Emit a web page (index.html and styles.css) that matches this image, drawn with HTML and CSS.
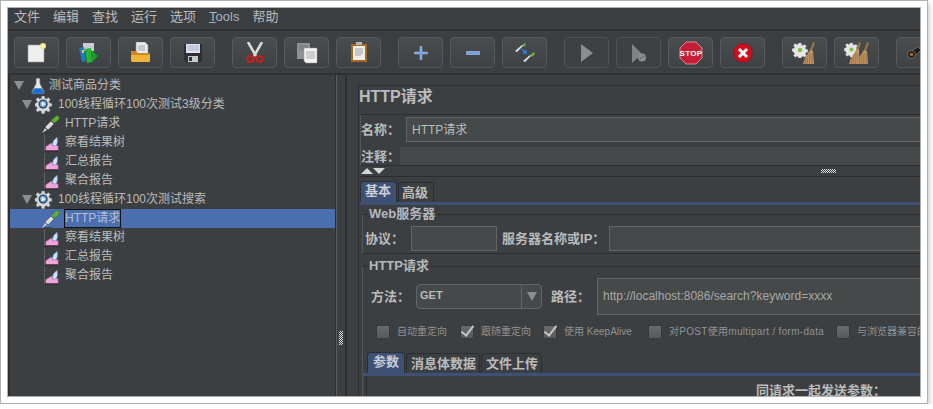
FILE: index.html
```html
<!DOCTYPE html>
<html>
<head>
    <title>JMeter</title>
    <link rel="stylesheet" href="styles.css">
</head>
<body>
    <!-- shared icons for the tree -->
    <svg class="defs" width="0" height="0">
        <symbol id="i-flask" viewBox="0 0 16 18">
            <path d="M6 .5h4v5.500l5 10q.5 1.500-1 1.500H2q-1.500 0-1-1.500l5-10z" fill="#e6e9ee" stroke="#9a9ea4" stroke-width=".6"/>
            <path d="M4 11.500h8l3 5q.2 1.400-1 1.400H2q-1.200 0-1-1.400z" fill="#1c6fd0"/>
        </symbol>
        <symbol id="i-gear" viewBox="0 0 18 18">
            <path d="M7.500 0h3l.5 2.600 1.700.7 2.200-1.500 2.100 2.100-1.500 2.200.7 1.700 2.600.5v3l-2.600.5-.7 1.700 1.500 2.200-2.100 2.100-2.200-1.500-1.700.7-.5 2.600h-3l-.5-2.600-1.700-.7-2.200 1.500-2.100-2.100 1.500-2.200-.7-1.700-2.600-.5v-3l2.600-.5.7-1.700-1.500-2.200 2.100-2.100 2.200 1.500 1.700-.7z" transform="scale(.9)" fill="#d8d8d8" stroke="#8a8a8a" stroke-width=".5"/>
            <circle cx="8.100" cy="8.100" r="4.600" fill="#24507f"/>
            <circle cx="8.100" cy="8.100" r="3" fill="#8db4dc"/>
            <path d="M6.800 6l3.600 2.100-3.600 2.100z" fill="#fff"/>
        </symbol>
        <symbol id="i-pipette" viewBox="0 0 18 18">
            <path d="M0 18l3-5 2 2z" fill="#c8c8c8"/>
            <path d="M3 12l6-6 3 3-6 6z" fill="#d9dde0" stroke="#555" stroke-width=".7"/>
            <path d="M9 5l3 3 2-1 3-3q1-2-1-3t-3 1l-2 2z" fill="#5fae3c" stroke="#3d7a25" stroke-width=".5"/>
            <path d="M2 18h8" stroke="#2b2b2b" stroke-width="1"/>
        </symbol>
        <symbol id="i-chart" viewBox="0 0 16 18">
            <path d="M.5 0v18" stroke="#8a8a8a" stroke-dasharray="1 1"/>
            <path d="M2 17v-4l6-4 1 3h6v5z" fill="#f0a6dc" stroke="#d060b0" stroke-width=".6"/>
            <path d="M9 11q0-5 5-8 1 6-1 8.500-2 1.500-4-.5z" fill="#cfe2fb" stroke="#7aa3d8" stroke-width=".6"/>
            <path d="M1 17.500h14" stroke="#222"/>
        </symbol>
        <symbol id="i-broom" viewBox="0 0 12 22">
            <path d="M10 0l2 1-3 8-2-1z" fill="#9a7446"/>
            <path d="M7 8l3 1 1 13H0l2-6z" fill="#bf9565"/>
            <path d="M3 16l-1 6M5 13l-1 9M7 11l-.5 11M9 11l0 11" stroke="#8c6a42" stroke-width=".7"/>
        </symbol>
        <symbol id="i-cog" viewBox="0 0 16 16">
            <path d="M6.500 0h3l.4 2.200 1.600.7 1.900-1.300 2 2-1.300 1.900.7 1.600 2.200.4v3l-2.200.4-.7 1.600 1.300 1.900-2 2-1.900-1.300-1.600.7-.4 2.200h-3l-.4-2.200-1.600-.7-1.900 1.300-2-2 1.300-1.900-.7-1.600L-1 9.500v-3l2.200-.4.7-1.600L.6 2.600l2-2 1.900 1.300 1.600-.7z" transform="translate(1 1) scale(.87)" fill="#e6e6e6" stroke="#a8a8a8" stroke-width=".5"/>
            <circle cx="8" cy="8" r="2.200" fill="#7bc142"/>
        </symbol>
    </svg>

    <div class="frame">
        <div class="window">
            <div class="menubar">
                <span>文件</span>
                <span>编辑</span>
                <span>查找</span>
                <span>运行</span>
                <span>选项</span>
                <span class="latin"><u>T</u>ools</span>
                <span>帮助</span>
            </div>

            <div class="toolbar">
                <div class="tool-group">
                    <button class="tool"><svg width="20" height="22" viewBox="0 0 20 22"><path d="M1 3h16v17H1z" fill="#efefef" stroke="#9a9a9a" stroke-width=".6"/><circle cx="16" cy="4" r="3" fill="#f6e27a"/><circle cx="16" cy="4" r="1.500" fill="#fffbe0"/></svg></button>
                    <button class="tool"><svg width="22" height="22" viewBox="0 0 22 22"><path d="M5 1h11v8H5z" fill="#c9cdd2"/><path d="M1 6l5-1 2 14-4 1z" fill="#1f78c8"/><path d="M7 7l6-1 1 14-5 1z" fill="#25b52f"/><path d="M13 8l7 6-6 6z" fill="#1c9a2a"/><path d="M4 8h2v3H4z" fill="#e8c640"/></svg></button>
                    <button class="tool"><svg width="22" height="22" viewBox="0 0 22 22"><path d="M6 0h9l3 3v10H6z" fill="#eceff2" stroke="#8a8a8a" stroke-width=".6"/><path d="M8 4h7M8 6h7M8 8h7" stroke="#8a9098" stroke-width=".8"/><path d="M1 9h5l2 2h12v8q0 1-1 1H3q-2 0-2-2z" fill="#c98a22"/><path d="M1 13h19v6q0 1-1 1H3q-2 0-2-2z" fill="#eeb43a"/></svg></button>
                    <button class="tool"><svg width="20" height="20" viewBox="0 0 20 20"><path d="M1 1h18v18H3l-2-2z" fill="#2d2f33"/><path d="M3 1h14v9H3z" fill="#dfe5ec"/><path d="M4 3h12M4 5h12M4 7h12" stroke="#8fa6c4" stroke-width=".8"/><path d="M5 13h10v6H5z" fill="#c9c9c9"/><path d="M6 14h3v4H6z" fill="#333"/></svg></button>
                </div>
                <div class="tool-group">
                    <button class="tool"><svg width="18" height="21" viewBox="0 0 18 21"><path d="M2 0l8 14M16 0L8 14" stroke="#d8dadc" stroke-width="2.600"/><circle cx="4.500" cy="17" r="3" fill="none" stroke="#d11a1a" stroke-width="2"/><circle cx="13.500" cy="17" r="3" fill="none" stroke="#d11a1a" stroke-width="2"/></svg></button>
                    <button class="tool"><svg width="22" height="22" viewBox="0 0 22 22"><path d="M1 1h13v16H1z" fill="#8e9296"/><path d="M3 4h9M3 6h9M3 8h9" stroke="#6c7074" stroke-width=".8"/><path d="M8 6h13v15H10l-2-2z" fill="#f2f2f2" stroke="#999" stroke-width=".5"/><path d="M10 10h9M10 12h9M10 14h9M10 16h9" stroke="#9a9a9a" stroke-width=".8"/></svg></button>
                    <button class="tool"><svg width="18" height="21" viewBox="0 0 18 21"><path d="M1 2h16v18H1z" fill="#a8691c"/><path d="M3 4h12v14H3z" fill="#eceef0"/><path d="M5 7h8M5 9h8M5 11h8M5 13h6" stroke="#888" stroke-width=".8"/><path d="M6 0h6v3H6z" fill="#b5b5b5"/></svg></button>
                </div>
                <div class="tool-group">
                    <button class="tool"><svg width="14" height="14" viewBox="0 0 14 14"><path d="M6 .5h2V6h5.500v2H8v5.500H6V8H.5V6H6z" fill="#6aa2e6" stroke="#cfe0f7" stroke-width=".4"/></svg></button>
                    <button class="tool"><svg width="14" height="4" viewBox="0 0 14 4"><path d="M.5.5h13v3H.5z" fill="#6aa2e6" stroke="#cfe0f7" stroke-width=".5"/></svg></button>
                    <button class="tool"><svg width="22" height="21" viewBox="0 0 22 21"><path d="M1 9l7-6 1 1-6 6z" fill="#e4e4e4"/><path d="M8 3l3-2 1 2-3 2z" fill="#6bb33f"/><path d="M9 19l7-6 1 1-6 6z" fill="#e4e4e4"/><path d="M16 13l4-3 1 2-3 3z" fill="#6bb33f"/><path d="M8 7l4 4m0-3v3h-3" fill="none" stroke="#2f7fe6" stroke-width="1.400"/></svg></button>
                </div>
                <div class="tool-group">
                    <button class="tool tool-off"><svg width="14" height="20" viewBox="0 0 14 20"><path d="M1 1l12 9-12 9z" fill="#8a8c8e"/></svg></button>
                    <button class="tool tool-off"><svg width="16" height="20" viewBox="0 0 16 20"><path d="M1 1l10 10-10 9z" fill="#808284"/><circle cx="11" cy="14.500" r="4" fill="#8a8c8e"/><path d="M9 16l4-3" stroke="#5c5e60"/></svg></button>
                    <button class="tool"><svg width="24" height="24" viewBox="0 0 24 24"><path d="M7 1h10l6 6v10l-6 6H7l-6-6V7z" fill="#c41f34" stroke="#e8a0a8" stroke-width=".8"/><text x="12" y="15" text-anchor="middle" class="stop-text">STOP</text></svg></button>
                    <button class="tool"><svg width="20" height="20" viewBox="0 0 20 20"><path d="M6 1h8l5 5v8l-5 5H6l-5-5V6z" fill="#cf0f1c" stroke="#7c0d14" stroke-width=".6"/><path d="M6 6l8 8M14 6l-8 8" stroke="#fff" stroke-width="3"/></svg></button>
                </div>
                <div class="tool-group">
                    <button class="tool"><svg width="26" height="22" viewBox="0 0 26 22"><use href="#i-cog" width="16" height="16" y="0"/><use href="#i-broom" x="11" width="12" height="22"/></svg></button>
                    <button class="tool"><svg width="26" height="22" viewBox="0 0 26 22"><use href="#i-cog" width="15" height="15" y="0"/><use href="#i-broom" x="5" width="12" height="22"/><use href="#i-broom" x="13" width="12" height="22"/></svg></button>
                </div>
                <div class="tool-group">
                    <button class="tool tool-clip"><svg width="14" height="13" viewBox="0 0 14 13"><path d="M4 5l7-4 3 3-6 6z" fill="#1d1d1d" stroke="#8a8a8a" stroke-width=".6"/><circle cx="4.500" cy="8.500" r="4" fill="#1d1d1d" stroke="#8a8a8a" stroke-width=".7"/><circle cx="4.500" cy="8.500" r="1.800" fill="#a8622a"/></svg></button>
                </div>
            </div>

            <div class="main">
                <div class="tree">
                    <div class="row depth-0"><i class="arrow"></i><svg class="flask" width="14" height="18"><use href="#i-flask"/></svg><span class="label">测试商品分类</span></div>
                    <div class="row depth-1"><i class="arrow"></i><svg class="gear" width="18" height="18"><use href="#i-gear"/></svg><span class="label">100线程循环100次测试3级分类</span></div>
                    <div class="row depth-2"><svg width="18" height="18"><use href="#i-pipette"/></svg><span class="label">HTTP请求</span></div>
                    <div class="row depth-3"><svg width="15" height="18"><use href="#i-chart"/></svg><span class="label">察看结果树</span></div>
                    <div class="row depth-3"><svg width="15" height="18"><use href="#i-chart"/></svg><span class="label">汇总报告</span></div>
                    <div class="row depth-3"><svg width="15" height="18"><use href="#i-chart"/></svg><span class="label">聚合报告</span></div>
                    <div class="row depth-1"><i class="arrow"></i><svg class="gear" width="18" height="18"><use href="#i-gear"/></svg><span class="label">100线程循环100次测试搜索</span></div>
                    <div class="row depth-2 selected"><svg width="18" height="18"><use href="#i-pipette"/></svg><span class="label">HTTP请求</span></div>
                    <div class="row depth-3"><svg width="15" height="18"><use href="#i-chart"/></svg><span class="label">察看结果树</span></div>
                    <div class="row depth-3"><svg width="15" height="18"><use href="#i-chart"/></svg><span class="label">汇总报告</span></div>
                    <div class="row depth-3"><svg width="15" height="18"><use href="#i-chart"/></svg><span class="label">聚合报告</span></div>
                </div>

                <div class="divider"><div class="grip grip-v"></div></div>

                <div class="detail">
                    <div class="detail-inner">
                        <div class="title">HTTP请求</div>

                        <div class="names">
                            <div class="name-row">
                                <label class="name-label">名称：</label>
                                <div class="field name-field">HTTP请求</div>
                            </div>
                            <div class="comment-row">
                                <label class="comment-label">注释：</label>
                                <div class="comment-field"></div>
                            </div>
                        </div>

                        <div class="splitter">
                            <i class="tri-up"></i><i class="tri-down"></i>
                            <div class="grip grip-h"></div>
                        </div>

                        <div class="tabs top-tabs">
                            <div class="tab active">基本</div>
                            <div class="tab">高级</div>
                        </div>

                        <div class="tab-body">
                            <fieldset class="group group-web">
                                <legend>Web服务器</legend>
                                <div class="form-row">
                                    <label class="strong">协议：</label>
                                    <div class="field proto"></div>
                                    <label class="strong">服务器名称或IP：</label>
                                    <div class="field grow"></div>
                                </div>
                            </fieldset>

                            <fieldset class="group group-http">
                                <legend>HTTP请求</legend>
                                <div class="form-row method-row">
                                    <label class="strong">方法：</label>
                                    <div class="select">
                                        <span class="select-value">GET</span>
                                        <span class="select-btn"><i class="arrow"></i></span>
                                    </div>
                                    <label class="strong">路径：</label>
                                    <div class="field grow path">http://localhost:8086/search?keyword=xxxx</div>
                                </div>

                                <div class="checks">
                                    <div class="check check-1"><i class="box"></i>自动重定向</div>
                                    <div class="check check-2"><i class="box on"></i>跟随重定向</div>
                                    <div class="check check-3"><i class="box on"></i>使用 KeepAlive</div>
                                    <div class="check check-4"><i class="box"></i>对POST使用multipart / form-data</div>
                                    <div class="check check-5"><i class="box"></i>与浏览器兼容的头</div>
                                </div>

                                <div class="tabs sub-tabs">
                                    <div class="tab active">参数</div>
                                    <div class="tab">消息体数据</div>
                                    <div class="tab">文件上传</div>
                                </div>
                                <div class="params">同请求一起发送参数：</div>
                            </fieldset>
                        </div>
                    </div>
                </div>
            </div>
        </div>
    </div>
</body>
</html>
```
FILE: styles.css
```css
html, body {
    margin: 0;
    background-color: #fff;
    overflow: hidden;
}
body {
    font-family: "Liberation Sans", "Noto Sans CJK SC", sans-serif;
    font-size: 12px;
    color: #bbb;
}
.defs {
    display: block;
    height: 0;
}
.frame {
    box-sizing: border-box;
    width: 928px;
    height: 404px;
    padding: 6px;
    background-color: #fff;
    border: 1px solid #b0b0b0;
    box-shadow: 2px 3px 4px rgba(0, 0, 0, 0.18);
}
.window {
    box-sizing: border-box;
    height: 390px;
    background-color: #3c3f41;
    border: 1px solid #b0b0b0;
    overflow: hidden;
}

/* menu */
.menubar {
    display: flex;
    gap: 13px;
    box-sizing: border-box;
    height: 23px;
    padding-left: 6px;
    line-height: 18px;
    font-size: 13px;
    border-bottom: 2px solid #2f3133;
}
.menubar .latin {
    color: #a9b2c0;
}

/* toolbar */
.toolbar {
    display: flex;
    gap: 17px;
    box-sizing: border-box;
    height: 42px;
    padding: 6px 0 5px 6px;
    overflow: hidden;
}
.tool-group {
    display: flex;
    flex-shrink: 0;
    gap: 7px;
}
.tool {
    display: flex;
    align-items: center;
    justify-content: center;
    box-sizing: border-box;
    width: 45px;
    height: 31px;
    padding: 0;
    background: linear-gradient(#4a4d50, #3f4244);
    border: 1px solid #56595b;
    border-radius: 4px;
}
.tool-off {
    background: #3e4143;
    border-color: #505355;
}
.tool-clip {
    justify-content: flex-end;
    padding-right: 19px;
}
.stop-text {
    font-family: "Liberation Sans", sans-serif;
    font-size: 8px;
    font-weight: bold;
    letter-spacing: 0.3px;
    fill: #fff;
}

/* main split */
.main {
    display: flex;
    height: 323px;
    border-top: 2px solid #2f3133;
}
.tree {
    flex: 0 0 328px;
    box-sizing: border-box;
    padding-top: 1px;
    border-left: 2px solid #2b2d2f;
    border-right: 1px solid #2b2d2f;
}
.row {
    display: flex;
    align-items: center;
    height: 19px;
    line-height: 19px;
    white-space: nowrap;
}
.row svg {
    flex-shrink: 0;
}
.label {
    box-sizing: border-box;
    height: 19px;
    margin-left: 4px;
    padding: 0 1px;
    line-height: 19px;
}
.depth-0 {
    padding-left: 4px;
}
.depth-0 .arrow {
    margin-right: 7px;
}
.depth-0 .label {
    margin-left: 3px;
}
.depth-1 {
    padding-left: 12px;
}
.depth-1 .arrow {
    margin-right: 3px;
}
.depth-1 .label {
    margin-left: 4px;
}
.depth-2 {
    padding-left: 32px;
}
.depth-3 {
    padding-left: 34px;
}
.depth-3 .label {
    margin-left: 5px;
}
.selected {
    background-color: #4b6eaf;
}
.selected .label {
    color: #b4bfd4;
    line-height: 17px;
    border: 1px solid #111;
    padding: 0;
}
.arrow {
    display: inline-block;
    flex-shrink: 0;
    width: 0;
    height: 0;
    border-left: 5px solid transparent;
    border-right: 5px solid transparent;
    border-top: 9px solid #8d8f91;
}

/* divider between the panes */
.divider {
    display: flex;
    flex: 0 0 9px;
    align-items: flex-end;
    justify-content: center;
    box-sizing: border-box;
    padding-bottom: 53px;
    border-left: 1px solid #5b5e60;
}
.grip {
    background: repeating-conic-gradient(#ddd 0 25%, transparent 0 50%) 0 0 / 2px 2px;
}
.grip-v {
    width: 4px;
    height: 14px;
}
.grip-h {
    width: 15px;
    height: 4px;
    margin-left: 436px;
}

/* right side */
.detail {
    flex: 1;
    min-width: 0;
    padding: 10px 0 0 11px;
    border-left: 2px solid #2b2d2f;
    overflow: hidden;
}
.detail-inner {
    box-sizing: border-box;
    width: 600px;
    height: 320px;
    border-left: 1px solid #2b2d2f;
}
.title {
    box-sizing: border-box;
    height: 30px;
    margin-left: -1px;
    padding-left: 1px;
    line-height: 21px;
    font-size: 16px;
    font-weight: bold;
    border-top: 1px solid #2b2d2f;
    border-bottom: 1px solid #2b2d2f;
}
.names {
    box-sizing: border-box;
    height: 51px;
    margin-left: 1px;
    padding-top: 2px;
    border-left: 1px solid #55585a;
    border-bottom: 1px solid #2b2d2f;
    font-size: 13px;
    font-weight: bold;
}
.name-row, .comment-row {
    display: flex;
    align-items: center;
}
.name-label {
    flex: 0 0 45px;
    padding-bottom: 2px;
}
.comment-label {
    flex: 0 0 39px;
    padding-bottom: 2px;
}
.name-field {
    flex: 1;
    height: 25px;
    padding: 0 0 2px 5px;
    font-size: 12px;
    font-weight: normal;
}
.comment-row {
    height: 18px;
    margin-top: 5px;
}
.comment-field {
    flex: 1;
    align-self: stretch;
    background-color: #45494a;
}
.field {
    display: flex;
    align-items: center;
    box-sizing: border-box;
    background-color: #45494a;
    border: 1px solid #646464;
}
.splitter {
    display: flex;
    align-items: center;
    box-sizing: border-box;
    height: 11px;
    padding-left: 2px;
    border-bottom: 1px solid #2b2d2f;
}
.tri-up, .tri-down {
    width: 0;
    height: 0;
    border-left: 6px solid transparent;
    border-right: 6px solid transparent;
}
.tri-up {
    border-bottom: 6px solid #d4d4d4;
}
.tri-down {
    border-top: 6px solid #d4d4d4;
}

/* tabs */
.tabs {
    display: flex;
    align-items: flex-end;
    gap: 1px;
    font-size: 13px;
    font-weight: bold;
}
.top-tabs {
    height: 25px;
    padding-left: 1px;
}
.tab {
    box-sizing: border-box;
    height: 20px;
    padding: 0 5px;
    line-height: 19px;
    border: 1px solid #2b2d2f;
    border-bottom: 0;
    border-radius: 4px 4px 0 0;
}
.tab.active {
    height: 21px;
    padding: 0 5px 0 4px;
    background-color: #3e5175;
    color: #c9cdd4;
    line-height: 17px;
}
.top-tabs .tab:not(.active) {
    padding: 0 5px 0 3px;
}
.tab-body {
    box-sizing: border-box;
    height: 195px;
    margin-left: 1px;
    padding-left: 2px;
    border-top: 3px solid #3e5175;
}

/* field groups */
.group {
    box-sizing: border-box;
    margin: 1px 0 0;
    padding: 0;
    min-width: 0;
    border: 1px solid #2b2d2f;
    border-left-color: #55585a;
    border-right: 0;
    border-radius: 3px 0 0 3px;
}
.group legend {
    margin-left: 4px;
    padding: 0 2px;
    font-size: 13px;
    font-weight: bold;
    line-height: 16px;
    color: #b4b8bd;
}
.group-http {
    margin-top: 4px;
    border-bottom: 0;
    height: 200px;
}
.form-row {
    display: flex;
    align-items: center;
}
.group-web .form-row {
    height: 25px;
    margin: 4px 0 2px;
    padding-left: 2px;
}
.strong {
    padding-bottom: 2px;
    font-size: 13px;
    font-weight: bold;
}
.proto {
    width: 86px;
    height: 25px;
    margin: 0 5px 0 7px;
}
.grow {
    flex: 1;
}
.group-web .grow {
    height: 25px;
    margin-left: 4px;
}
.method-row {
    height: 37px;
    margin-top: 4px;
    padding-left: 8px;
}
.select {
    display: flex;
    box-sizing: border-box;
    width: 126px;
    height: 25px;
    margin: 0 9px 0 6px;
    background-color: #45494a;
    border: 1px solid #646464;
    border-radius: 4px;
}
.select-value {
    flex: 1;
    padding-left: 3px;
    line-height: 20px;
    font-weight: bold;
    font-size: 11px;
}
.select-btn {
    display: flex;
    align-items: center;
    justify-content: center;
    width: 19px;
    border-left: 1px solid #646464;
}
.path {
    height: 37px;
    margin-left: 7px;
    padding: 0 0 2px 5px;
    color: #a8a8a8;
}
.checks {
    display: flex;
    height: 14px;
    margin-top: 10px;
    font-size: 10px;
    line-height: 14px;
    color: #8f9295;
    white-space: nowrap;
}
.check {
    display: flex;
    flex-shrink: 0;
    align-items: center;
    gap: 7px;
}
.check-1 {
    margin-left: 13px;
    width: 84px;
}
.check-2 {
    width: 83px;
}
.check-3 {
    width: 105px;
}
.check-4 {
    width: 188px;
    letter-spacing: 0.3px;
}
.box {
    flex-shrink: 0;
    box-sizing: border-box;
    width: 14px;
    height: 14px;
    background: linear-gradient(#6a6c6e, #565859);
    border: 1px solid #37393a;
    border-radius: 2px;
}
.box.on {
    position: relative;
}
.box.on::after {
    content: "";
    position: absolute;
    left: 3px;
    top: -3px;
    width: 5px;
    height: 11px;
    border-right: 2px solid #c6c6c6;
    border-bottom: 2px solid #c6c6c6;
    transform: rotate(38deg);
}
.sub-tabs {
    height: 21px;
    margin-top: 13px;
    padding-left: 4px;
    border-bottom: 3px solid #3e5175;
}
.sub-tabs .tab {
    padding: 0 3px 0 4px;
}
.sub-tabs .tab.active {
    padding: 0 5px;
}
.params {
    box-sizing: border-box;
    height: 30px;
    margin-left: 3px;
    padding: 4px 0 0 389px;
    font-size: 13px;
    font-weight: bold;
    border-left: 1px solid #2b2d2f;
}
```
